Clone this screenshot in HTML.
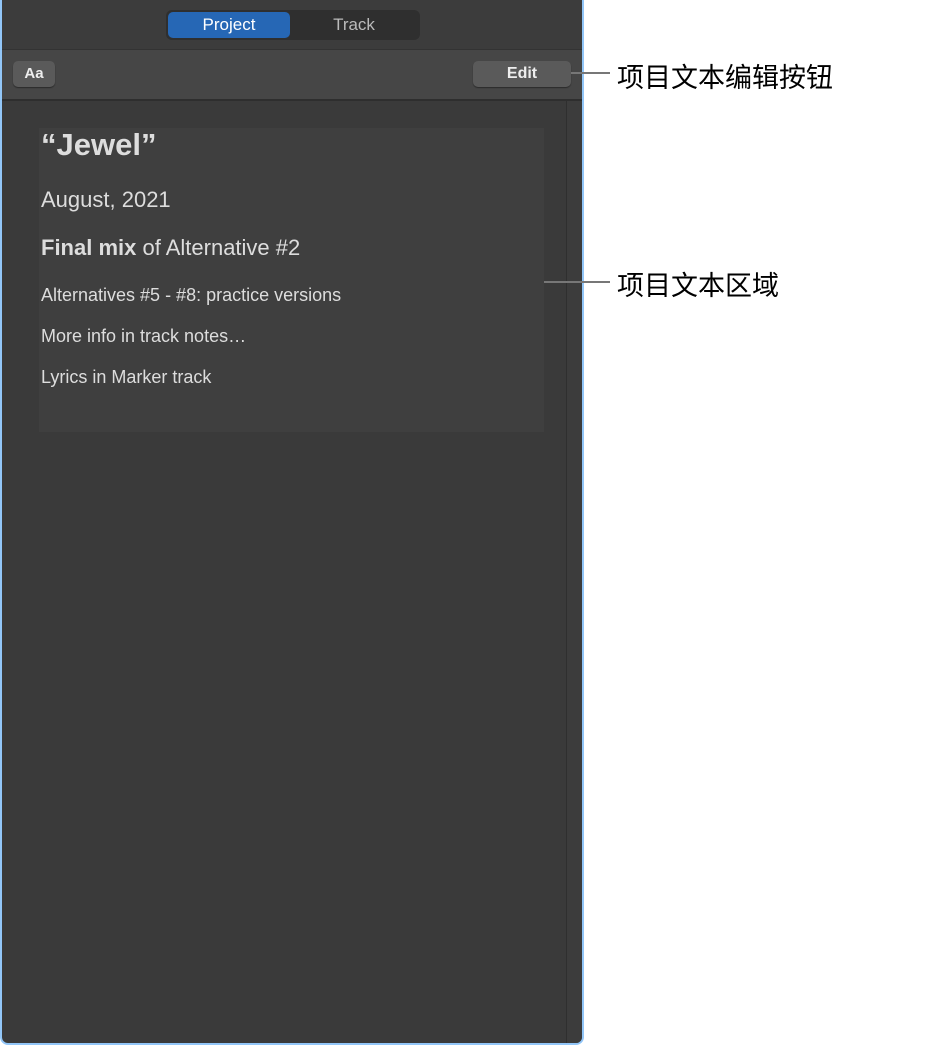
<!DOCTYPE html><html><head><style>
body{margin:0;width:942px;height:1051px;background:#fff;position:relative;font-family:"Liberation Sans",Arial,sans-serif;overflow:hidden}
.panel{position:absolute;left:0;top:0;width:580px;height:1043px;border:2px solid #92c6f8;border-top:none;border-radius:0 0 8px 8px;background:#3a3a3a;overflow:hidden}
.hdr{position:absolute;left:0;top:0;width:100%;height:49px;background:#3c3c3c;border-bottom:1px solid #333}
.seg{position:absolute;left:164px;top:10px;width:254px;height:30px;background:#2f2f2f;border-radius:6px}
.seg .p{position:absolute;left:2px;top:2px;width:122px;height:26px;background:#2667b5;border-radius:5px;color:#fff;font-size:17px;text-align:center;line-height:26px}
.seg .t{position:absolute;left:124px;top:2px;width:128px;height:26px;color:#bbb;font-size:17px;text-align:center;line-height:26px}
.tb{position:absolute;left:0;top:50px;width:100%;height:49px;background:#464646;border-bottom:2px solid #2e2e2e}
.btn{position:absolute;background:#5a5a5a;border-radius:5px;color:#eee;font-size:16px;text-align:center;line-height:26px;height:26px;box-shadow:0 1px 1px #2a2a2a}
.scroll{position:absolute;left:564px;top:101px;width:16px;bottom:0;background:#3c3c3c;border-left:1px solid #2f2f2f}
.box{position:absolute;left:37px;top:128px;width:505px;height:304px;background:#3f3f3f}
.tx{position:absolute;left:39px;color:#ddd;white-space:nowrap}
.lab{position:absolute;left:617px;font-size:27px;font-family:"Liberation Sans","Noto Sans CJK SC",sans-serif;color:#000}
.ln{position:absolute;height:2px;background:#777}
</style></head><body>
<div class="panel">
<div class="hdr"><div class="seg"><div class="p">Project</div><div class="t">Track</div></div></div>
<div class="tb"><div class="btn" style="left:11px;top:11px;width:42px;font-size:15px;font-weight:bold">Aa</div><div class="btn" style="left:471px;top:11px;width:98px;font-weight:bold">Edit</div></div>
<div class="scroll"></div>
<div class="box"></div>
<div class="tx" style="top:127px;font-size:31px;font-weight:bold">“Jewel”</div>
<div class="tx" style="top:187px;font-size:22px">August, 2021</div>
<div class="tx" style="top:235px;font-size:22px"><b>Final mix</b> of Alternative #2</div>
<div class="tx" style="top:285px;font-size:18px">Alternatives #5 - #8: practice versions</div>
<div class="tx" style="top:326px;font-size:18px">More info in track notes…</div>
<div class="tx" style="top:367px;font-size:18px">Lyrics in Marker track</div>
</div>
<div class="ln" style="left:571px;top:72px;width:39px"></div>
<div class="lab" style="top:56px">项目文本编辑按钮</div>
<div class="ln" style="left:544px;top:281px;width:66px"></div>
<div class="lab" style="top:264px">项目文本区域</div>
</body></html>
